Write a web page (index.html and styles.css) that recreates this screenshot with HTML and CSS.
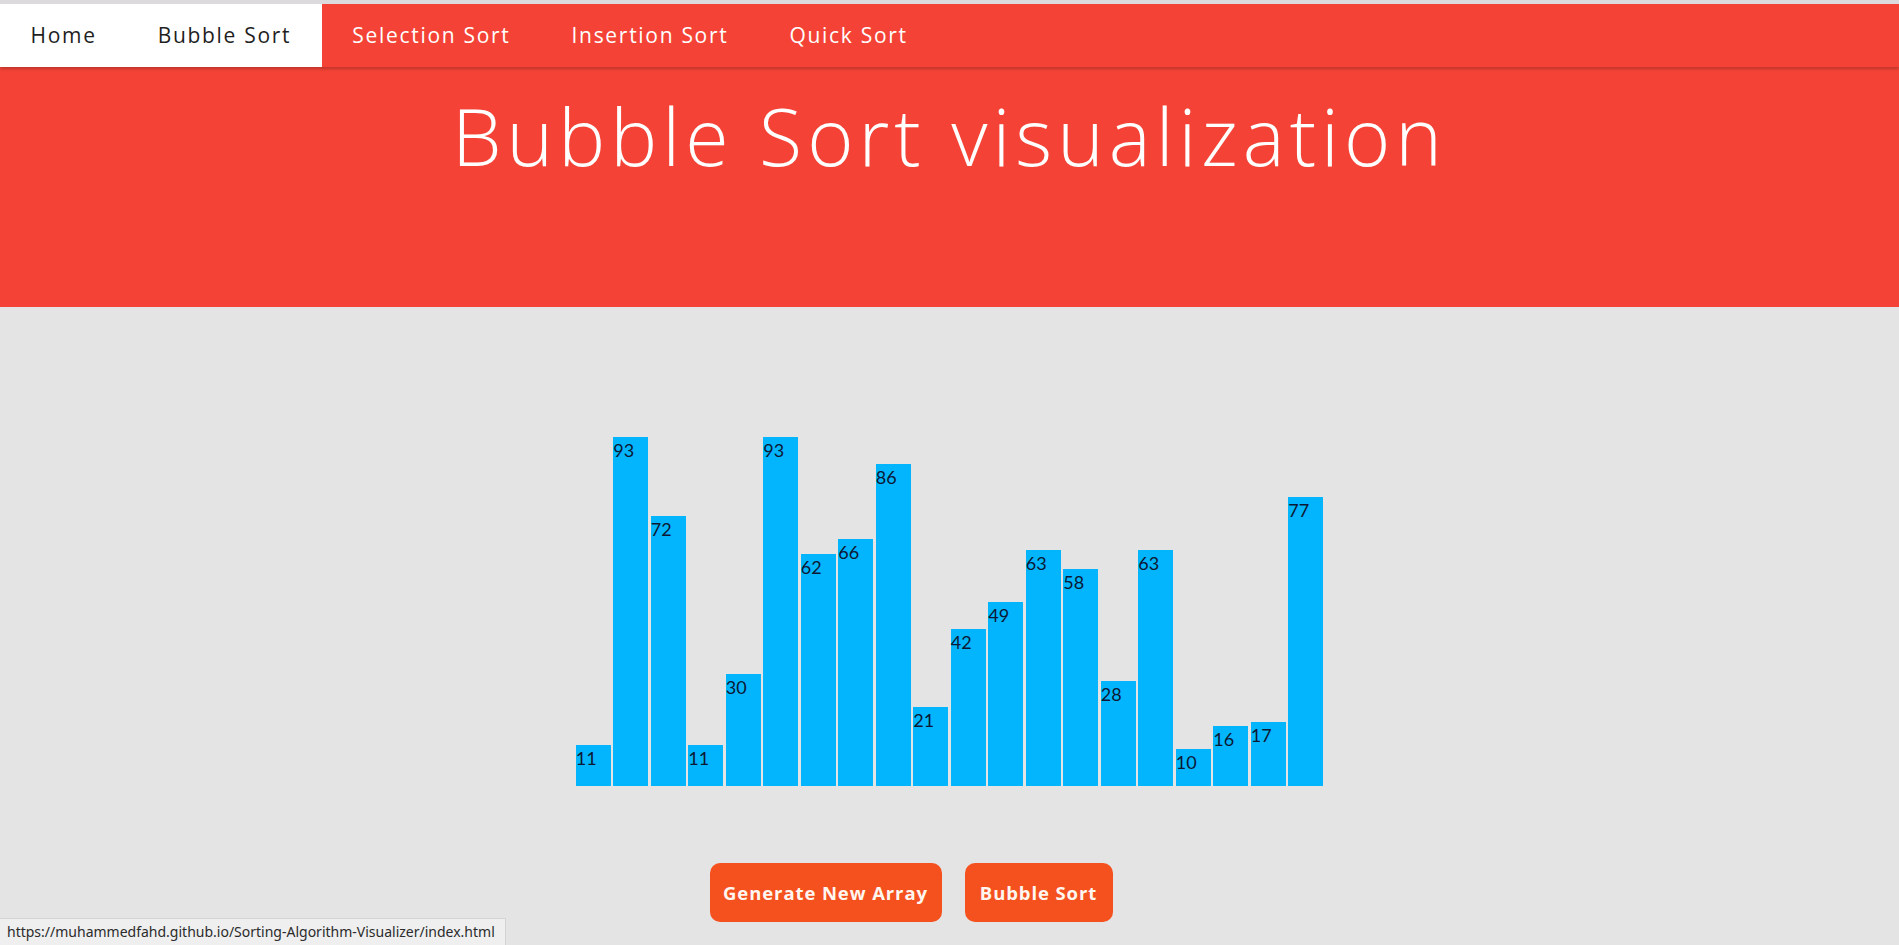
FILE: index.html
```html
<!DOCTYPE html>
<html lang="en">
<head>
<meta charset="utf-8">
<title>Bubble Sort visualization</title>
<link rel="stylesheet" href="styles.css">
</head>
<body>
<nav class="nav">
  <a class="nav-link nav-link-light" href="#">Home</a>
  <a class="nav-link nav-link-light" href="#">Bubble Sort</a>
  <a class="nav-link" href="#">Selection Sort</a>
  <a class="nav-link" href="#">Insertion Sort</a>
  <a class="nav-link" href="#">Quick Sort</a>
</nav>
<header class="hero">
  <h1 class="hero-title">Bubble Sort visualization</h1>
</header>
<main class="main">
  <div class="chart">
    <div class="bar" style="height:41.25px"><span class="bar-label">11</span></div>
    <div class="bar" style="height:348.75px"><span class="bar-label">93</span></div>
    <div class="bar" style="height:270px"><span class="bar-label">72</span></div>
    <div class="bar" style="height:41.25px"><span class="bar-label">11</span></div>
    <div class="bar" style="height:112.5px"><span class="bar-label">30</span></div>
    <div class="bar" style="height:348.75px"><span class="bar-label">93</span></div>
    <div class="bar" style="height:232.5px"><span class="bar-label">62</span></div>
    <div class="bar" style="height:247.5px"><span class="bar-label">66</span></div>
    <div class="bar" style="height:322.5px"><span class="bar-label">86</span></div>
    <div class="bar" style="height:78.75px"><span class="bar-label">21</span></div>
    <div class="bar" style="height:157.5px"><span class="bar-label">42</span></div>
    <div class="bar" style="height:183.75px"><span class="bar-label">49</span></div>
    <div class="bar" style="height:236.25px"><span class="bar-label">63</span></div>
    <div class="bar" style="height:217.5px"><span class="bar-label">58</span></div>
    <div class="bar" style="height:105px"><span class="bar-label">28</span></div>
    <div class="bar" style="height:236.25px"><span class="bar-label">63</span></div>
    <div class="bar" style="height:37.5px"><span class="bar-label">10</span></div>
    <div class="bar" style="height:60px"><span class="bar-label">16</span></div>
    <div class="bar" style="height:63.75px"><span class="bar-label">17</span></div>
    <div class="bar" style="height:288.75px"><span class="bar-label">77</span></div>
  </div>
  <div class="actions">
    <button class="btn btn-wide" type="button">Generate New Array</button>
    <button class="btn" type="button">Bubble Sort</button>
  </div>
</main>
<div class="status">https://muhammedfahd.github.io/Sorting-Algorithm-Visualizer/index.html</div>
</body>
</html>
```
FILE: styles.css
```css
html, body {
  margin: 0;
  padding: 0;
}
body {
  background: #e4e4e4;
  border-top: 4px solid #dcdadd;
  font-family: "Open Sans", "Noto Sans", sans-serif;
  min-height: 941px;
  overflow: hidden;
}
.nav {
  display: flex;
  height: 63px;
  background: #f44336;
  box-shadow: 0 2px 3px rgba(0, 0, 0, 0.22);
  position: relative;
  z-index: 2;
}
.nav-link {
  display: block;
  padding: 0 30.5px;
  line-height: 63px;
  color: #ffffff;
  text-decoration: none;
  font-family: "Open Sans", sans-serif;
  font-size: 21px;
  font-weight: 400;
  letter-spacing: 1.7px;
}
.nav-link-light {
  background: #ffffff;
  color: #1f1f1f;
}
.hero {
  background: #f44336;
  height: 240px;
  text-align: center;
}
.hero-title {
  margin: 0;
  padding-top: 19px;
  color: #ffffff;
  font-family: "Open Sans", sans-serif;
  font-weight: 300;
  font-size: 79px;
  line-height: 100px;
  letter-spacing: 5px;
}
.main {
  display: flex;
  flex-direction: column;
  align-items: center;
}
.chart {
  display: flex;
  align-items: flex-end;
  gap: 2.5px;
  height: 420px;
  margin-top: 59px;
}
.bar {
  width: 35px;
  background: #03b5fc;
}
.bar-label {
  display: block;
  font-family: Lato, sans-serif;
  font-size: 18px;
  line-height: 27px;
  color: #0c1834;
}
.actions {
  display: flex;
  gap: 23px;
  margin-top: 77px;
  padding-right: 77px;
}
.btn {
  height: 59px;
  width: 148px;
  border: none;
  border-radius: 10px;
  background: #f4511e;
  color: #fff6f0;
  font-family: "Open Sans", sans-serif;
  font-weight: 700;
  font-size: 18.5px;
  letter-spacing: 0.9px;
  padding: 0;
}
.btn-wide {
  width: 232px;
}
.status {
  position: fixed;
  left: 0;
  bottom: 0;
  height: 27px;
  width: 506px;
  box-sizing: border-box;
  padding-left: 7px;
  background: #efefef;
  border-top: 1px solid #d3d3d3;
  border-right: 1px solid #d3d3d3;
  color: #2b2b2b;
  font-family: "Noto Sans", sans-serif;
  font-size: 14px;
  line-height: 26px;
  white-space: nowrap;
}
```
